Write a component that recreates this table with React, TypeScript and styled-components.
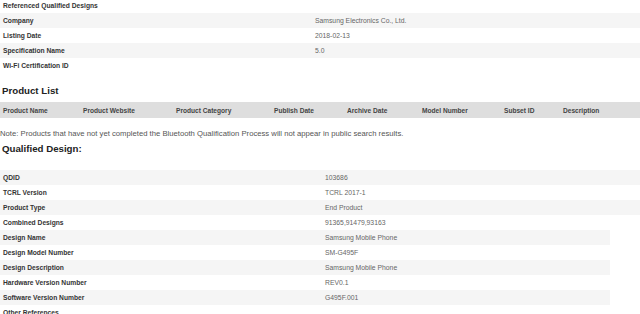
import styled, { createGlobalStyle } from 'styled-components';

const GlobalStyle = createGlobalStyle`
  html, body {
    margin: 0;
    padding: 0;
    background: #fff;
  }
  body {
    font-family: "Liberation Sans", Arial, sans-serif;
    overflow: hidden;
  }
`;

const Page = styled.div`
  width: 640px;
  margin-top: -2px;
`;

const Table = styled.div<{ $width?: number }>`
  width: ${(props) => (props.$width ? `${props.$width}px` : '100%')};
`;

const Row = styled.div<{ $striped: boolean; $labelWidth: number }>`
  display: grid;
  grid-template-columns: ${(props) => props.$labelWidth}px 1fr;
  height: 15px;
  align-items: center;
  background-color: ${(props) => (props.$striped ? '#f5f5f5' : '#fff')};
`;

const Label = styled.div`
  padding-left: 3px;
  font-size: 6.7px;
  font-weight: bold;
  color: #333;
  white-space: nowrap;
`;

const Value = styled.div`
  padding-left: 3px;
  font-size: 6.8px;
  color: #666;
  white-space: nowrap;
`;

const Heading = styled.h2<{ $top: number; $bottom: number }>`
  margin: ${(props) => props.$top}px 0 ${(props) => props.$bottom}px 0;
  padding-left: 2px;
  font-size: 9.7px;
  line-height: 12px;
  font-weight: bold;
  color: #222;
`;

const HeaderBar = styled.div`
  display: grid;
  grid-template-columns: 80px 93px 98px 73px 75px 82px 59px 1fr;
  height: 16px;
  align-items: center;
  background-color: #dedede;
`;

const HeaderCell = styled.div`
  padding-left: 3px;
  font-size: 6.6px;
  font-weight: bold;
  color: #444;
  white-space: nowrap;
`;

const Note = styled.p`
  margin: 10px 0 0 0;
  padding-left: 0;
  font-size: 7.7px;
  line-height: 11px;
  color: #555;
  white-space: nowrap;
`;

const referenced = [
  ['Referenced Qualified Designs', ''],
  ['Company', 'Samsung Electronics Co., Ltd.'],
  ['Listing Date', '2018-02-13'],
  ['Specification Name', '5.0'],
  ['Wi-Fi Certification ID', ''],
];

const productColumns = [
  'Product Name',
  'Product Website',
  'Product Category',
  'Publish Date',
  'Archive Date',
  'Model Number',
  'Subset ID',
  'Description',
];

const designTop = [
  ['QDID', '103686'],
  ['TCRL Version', 'TCRL 2017-1'],
  ['Product Type', 'End Product'],
  ['Combined Designs', '91365,91479,93163'],
];

const designBottom = [
  ['Design Name', 'Samsung Mobile Phone'],
  ['Design Model Number', 'SM-G495F'],
  ['Design Description', 'Samsung Mobile Phone'],
  ['Hardware Version Number', 'REV0.1'],
  ['Software Version Number', 'G495F.001'],
  ['Other References', ''],
];

const App = () => {
  return (
    <Page>
      <GlobalStyle />
      <Table>
        {referenced.map(([label, value], i) => (
          <Row key={label} $striped={i % 2 === 1} $labelWidth={312}>
            <Label>{label}</Label>
            <Value>{value}</Value>
          </Row>
        ))}
      </Table>

      <Heading $top={12} $bottom={5}>Product List</Heading>
      <HeaderBar>
        {productColumns.map((col) => (
          <HeaderCell key={col}>{col}</HeaderCell>
        ))}
      </HeaderBar>
      <Note>
        Note: Products that have not yet completed the Bluetooth Qualification Process will not appear in public search results.
      </Note>

      <Heading $top={4} $bottom={15}>Qualified Design:</Heading>
      <Table>
        {designTop.map(([label, value], i) => (
          <Row key={label} $striped={i % 2 === 0} $labelWidth={322}>
            <Label>{label}</Label>
            <Value>{value}</Value>
          </Row>
        ))}
      </Table>
      <Table $width={610}>
        {designBottom.map(([label, value], i) => (
          <Row key={label} $striped={i % 2 === 0} $labelWidth={322}>
            <Label>{label}</Label>
            <Value>{value}</Value>
          </Row>
        ))}
      </Table>
    </Page>
  );
};

export default App;
